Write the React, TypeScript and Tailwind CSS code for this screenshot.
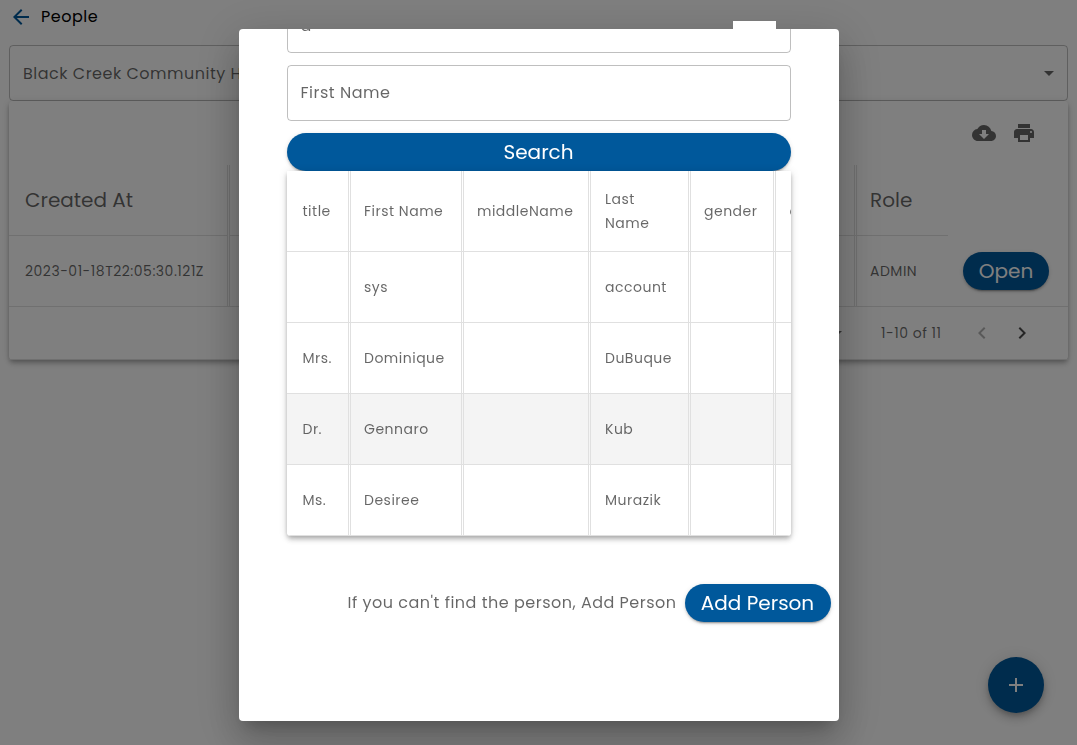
import React from "react";
import {
  MdAdd,
  MdArrowBack,
  MdArrowDropDown,
  MdChevronLeft,
  MdChevronRight,
  MdCloudDownload,
  MdPrint,
} from "react-icons/md";

const pillShadow =
  "shadow-[0_3px_1px_-2px_rgba(0,0,0,0.2),0_2px_2px_rgba(0,0,0,0.14),0_1px_5px_rgba(0,0,0,0.12)]";
const cardShadow =
  "shadow-[0_2px_4px_-1px_rgba(0,0,0,0.2),0_4px_5px_rgba(0,0,0,0.14),0_1px_10px_rgba(0,0,0,0.12)]";

const columns = [
  { width: "w-[64px] pl-4", label: "title" },
  { width: "w-[113px] pl-[13.5px]", label: "First Name" },
  { width: "w-[127px] pl-[13.5px]", label: "middleName" },
  { width: "w-[100px] pl-[14.5px]", label: "Last Name" },
  { width: "w-[85px] pl-[13.5px]", label: "gender" },
  { width: "w-[120px] pl-[14px]", label: "dob" },
];

const people = [
  { cells: ["", "sys", "", "account", "", ""], active: false },
  { cells: ["Mrs.", "Dominique", "", "DuBuque", "", ""], active: false },
  { cells: ["Dr.", "Gennaro", "", "Kub", "", ""], active: true },
  { cells: ["Ms.", "Desiree", "", "Murazik", "", ""], active: false },
];

function PeoplePage() {
  return (
    <div className="flex h-[745px] w-[1077px] flex-col bg-white px-[9px] text-black/60">
      <header className="flex h-[45px] items-start pt-[5px]">
        <MdArrowBack className="size-6 text-[#00589b]" />
        <span className="ml-2 text-[16px] leading-6 tracking-[0.5px] text-black">People</span>
      </header>

      <div className="flex h-14 w-[1059px] items-center justify-between rounded border border-black/25 pl-[13px] pr-[6px]">
        <span className="whitespace-nowrap pt-px text-[16px] tracking-[0.5px]">
          Black Creek Community Health Centre
        </span>
        <MdArrowDropDown className="size-6" />
      </div>

      <section className={`flex h-[259px] w-[1059px] flex-col rounded bg-white ${cardShadow}`}>
        <div className="flex h-16 items-center justify-end gap-4 pr-8">
          <MdCloudDownload className="size-6" />
          <MdPrint className="size-6" />
        </div>
        <div className="flex h-[71px] text-[20px]">
          <div className="flex w-[218px] items-center border-b border-[#e0e0e0] pl-4">Created At</div>
          <div className="w-[630px] border-x-[3px] border-b border-double border-[#e0e0e0]" />
          <div className="flex w-[91px] items-center border-b border-[#e0e0e0] pl-[13px]">Role</div>
        </div>
        <div className="flex h-[71px] border-b border-[#e0e0e0] text-[14px] tracking-[0.5px]">
          <div className="flex w-[218px] items-center pl-4">2023-01-18T22:05:30.121Z</div>
          <div className="w-[630px] border-x-[3px] border-double border-[#e0e0e0]" />
          <div className="flex w-[91px] items-center pl-[13px]">ADMIN</div>
          <div className="flex items-center pl-[15px]">
            <button className={`h-[38px] w-[86px] rounded-full bg-[#00589b] text-[20px] tracking-normal text-white ${pillShadow}`}>
              Open
            </button>
          </div>
        </div>
        <div className="flex h-[52px] items-center justify-end pr-[34px] text-[14px]">
          <MdArrowDropDown className="mr-[32px] size-6" />
          <span className="w-[61px] whitespace-nowrap tracking-[0.5px]">1-10 of 11</span>
          <MdChevronLeft className="ml-[28px] size-6 text-black/30" />
          <MdChevronRight className="ml-4 size-6 text-black/70" />
        </div>
        <div className="h-px bg-[#e0e0e0]" />
      </section>

      <div className="mt-[297px] flex justify-end pr-6">
        <button className="flex size-14 shrink-0 items-center justify-center rounded-full bg-[#00589b] text-white shadow-[0_3px_5px_-1px_rgba(0,0,0,0.2),0_6px_10px_rgba(0,0,0,0.14),0_1px_18px_rgba(0,0,0,0.12)]">
          <MdAdd className="size-6" />
        </button>
      </div>
    </div>
  );
}

function ResultsTable() {
  return (
    <div className={`relative h-[365px] rounded-b bg-white text-[14px] tracking-[0.5px] ${cardShadow}`}>
      <div className="w-full overflow-hidden rounded-b">
        <div className="flex h-[81px] w-[609px] border-b border-[#e0e0e0]">
          {columns.map((c) => (
            <div
              key={c.label}
              className={`flex shrink-0 items-center border-r-[3px] border-double border-[#e0e0e0] pr-3 leading-6 ${c.width}`}
            >
              {c.label}
            </div>
          ))}
        </div>
        {people.map((p, r) => (
          <div
            key={r}
            className={`flex h-[71px] w-[609px] border-b border-[#e0e0e0] ${p.active ? "bg-[#f4f4f4]" : "bg-white"}`}
          >
            {p.cells.map((text, i) => (
              <div
                key={i}
                className={`flex shrink-0 items-center whitespace-nowrap border-r-[3px] border-double border-[#e0e0e0] ${columns[i].width}`}
              >
                {text}
              </div>
            ))}
          </div>
        ))}
      </div>
    </div>
  );
}

function PersonDialog() {
  return (
    <div className="fixed inset-0 z-10 flex items-start justify-center bg-black/50 pt-[29px]">
      <div className="relative h-[692px] w-[600px] rounded bg-white text-black/60 shadow-[0_11px_15px_-7px_rgba(0,0,0,0.2),0_24px_38px_3px_rgba(0,0,0,0.14),0_9px_46px_8px_rgba(0,0,0,0.12)]">
        <div className="absolute -top-2 left-[494px] h-2 w-[43px] bg-white" />
        <div className="flex h-full flex-col overflow-hidden rounded">
          <div className="-mt-8 flex flex-col px-12">
            <div className="flex h-14 shrink-0 items-center rounded border border-black/25 px-[13px] pt-0.5 text-[16px] text-black/60">
              a
            </div>
            <div className="mt-3 flex h-14 shrink-0 items-center rounded border border-black/25 px-[13px] text-[16px] tracking-[0.5px]">
              First Name
            </div>
            <button className={`mt-3 h-[38px] shrink-0 rounded-full bg-[#00589b] text-[20px] text-white ${pillShadow}`}>
              Search
            </button>
            <ResultsTable />
          </div>
          <div className="mt-12 flex items-center justify-end pr-2">
            <span className="w-[337px] whitespace-nowrap text-[16px] tracking-[0.5px]">
              If you can't find the person, Add Person
            </span>
            <button className={`h-[38px] w-[146px] rounded-full bg-[#00589b] text-[20px] text-white ${pillShadow}`}>
              Add Person
            </button>
          </div>
        </div>
      </div>
    </div>
  );
}

export default function App() {
  return (
    <div className="h-[745px] w-[1077px] overflow-hidden font-[Poppins,Inter,sans-serif]">
      <PeoplePage />
      <PersonDialog />
    </div>
  );
}
